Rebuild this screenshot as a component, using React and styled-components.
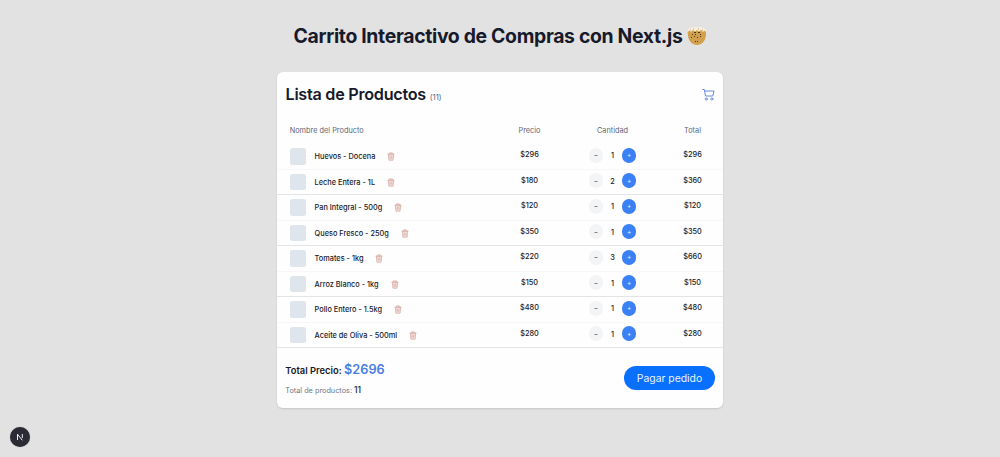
import React from 'react';
import styled, { createGlobalStyle } from 'styled-components';

const GlobalStyle = createGlobalStyle`
  * { box-sizing: border-box; }
  body {
    margin: 0;
    background: #e3e2e2;
    color: #171a2b;
    font-family: Inter, "Liberation Sans", sans-serif;
  }
`;

const Page = styled.main`
  min-height: 457px;
  display: flex;
  flex-direction: column;
  align-items: center;
  padding-top: 22px;
`;

const Title = styled.h1`
  display: flex;
  align-items: center;
  gap: 4px;
  height: 28px;
  margin: 0 0 22px 2px;
  font-size: 19.4px;
  font-weight: 650;
  letter-spacing: -0.33px;
  white-space: nowrap;
`;

const Card = styled.section`
  width: 446px;
  height: 336px;
  display: flex;
  flex-direction: column;
  background: #fefefe;
  border-radius: 6px;
  box-shadow: 0 1px 2px rgba(0, 0, 0, 0.12);
`;

const CardHeader = styled.header`
  height: 45px;
  display: flex;
  align-items: center;
  justify-content: space-between;
  padding: 0 8px 0 8.5px;
`;

const CardTitle = styled.h2`
  margin: 0 0 1px;
  font-size: 16.2px;
  font-weight: 600;
  letter-spacing: -0.27px;
  white-space: nowrap;
`;

const Count = styled.span`
  font-size: 7.7px;
  font-weight: 400;
  letter-spacing: 0;
  color: #5c6274;
`;

const Row = styled.div`
  display: grid;
  grid-template-columns: 219px 67px 99px 61px;
  height: 25.5px;
  border-bottom: 1px solid ${(p) => (p.$strong ? '#e3e4e6' : '#f7f7f9')};
  font-size: 7.35px;
  font-weight: 500;
`;

const HeadRow = styled(Row)`
  height: 27px;
  padding-bottom: 1px;
  border: 0;
  font-weight: 400;
  color: #5f6575;
`;

const Cell = styled.div`
  display: flex;
  align-items: center;
  justify-content: center;
  padding-bottom: ${(p) => p.$lift || 0}px;
`;

const NameCell = styled(Cell)`
  justify-content: flex-start;
  padding: 0.6px 0 0 12.7px;
  white-space: nowrap;
`;

const Thumb = styled.span`
  width: 16.5px;
  height: 16.5px;
  margin-right: 8.4px;
  border-radius: 2.5px;
  background: #dfe5ed;
`;

const Remove = styled.button`
  display: flex;
  margin: 0 0 0 12px;
  padding: 0;
  border: 0;
  background: none;
`;

const Step = styled.button`
  display: flex;
  align-items: center;
  justify-content: center;
  width: 14.6px;
  height: 14.6px;
  padding: 0;
  border: 0;
  border-radius: 50%;
  background: ${(p) => (p.$primary ? '#3b80f5' : '#f2f4f6')};
  color: ${(p) => (p.$primary ? '#e4eeff' : '#4f5562')};
  font: 500 6.5px Inter, sans-serif;
`;

const Quantity = styled.span`
  width: 18.6px;
  text-align: center;
  padding-top: 1px;
`;

const Footer = styled.footer`
  flex: 1;
  display: flex;
  align-items: center;
  justify-content: space-between;
  padding: 0 8px 0 8.3px;
`;

const TotalPrice = styled.p`
  margin: 2px 0 0;
  font-size: 9.4px;
  font-weight: 600;
  line-height: 18px;
  strong {
    font-size: 12.7px;
    font-weight: 600;
    color: #4a7de4;
  }
`;

const TotalCount = styled.p`
  margin: 3px 0 0;
  font-size: 7.3px;
  line-height: 14px;
  color: #70778a;
  span {
    font-size: 8.5px;
    font-weight: 500;
    color: #171a2b;
  }
`;

const PayButton = styled.button`
  width: 91px;
  height: 24px;
  padding: 0;
  border: 0;
  border-radius: 12px;
  background: #0870fc;
  color: #e9f3ff;
  font: 400 10.4px Inter, sans-serif;
`;

const DevBadge = styled.div`
  position: fixed;
  left: 10px;
  bottom: 10px;
  width: 20px;
  height: 20px;
  display: flex;
  align-items: center;
  justify-content: center;
  border-radius: 50%;
  background: #2a2b34;
  box-shadow: 0 0 1px rgba(0, 0, 0, 0.4);
`;

const CookieIcon = () => (
  <svg width="22" height="21" viewBox="0 0 22 21">
    <path d="M1.5 6Q1 3.5 3 3Q4 1 6.5 1.8Q9 .2 11 1.4Q14 0 16 1.8Q18.800 1.300 19.500 3.500Q21 5 20 7L17 9H4Z" fill="#f8eee0" />
    <path d="M1.700 6L3.500 4.500L5 6L7 4L9 5.500L11 4L13 5.500L15 4L17 6L18.500 4.500L20 6C20.500 14 16.500 19 11 19S1.500 14 1.700 6Z" fill="#d2a04d" />
    <path d="M4 4h1M7 3h1M12 3h1M16 4h1M5 6h1M14 5h1M18 6h1" stroke="#d9a35c" />
    <path d="M8 6.500h2M12 6.500h2M6 8.500h1M9 8.500h1M14 8.500h1M5 11.500h1M8 10.500h1M11 11.500h1M14 10.500h1M9 15.500h1M11 15.500h1" stroke="#4a371f" />
  </svg>
);

const CartIcon = () => (
  <svg width="13" height="13" viewBox="0 0 13 13" fill="none" stroke="#5580e0" strokeLinecap="round" strokeLinejoin="round">
    <path d="M.7 1.500H2.300L3.500 8H10.800L12 3H2.800" strokeWidth=".9" />
    <circle cx="4.200" cy="11" r="1.100" strokeWidth=".8" />
    <circle cx="9.800" cy="11" r="1.100" strokeWidth=".8" />
  </svg>
);

const TrashIcon = () => (
  <svg width="8" height="9" viewBox="0 0 8 9" fill="none" stroke="#d3a69d" strokeWidth=".7">
    <path d="M1.300 2.200L1.900 8.200H6.100L6.700 2.200Z" fill="#f4e1dc" />
    <path d="M.5 2.100H7.500M2.700 2V.8H5.300V2M3.200 3.700V6.700M4.800 3.700V6.700" />
  </svg>
);

const NextIcon = () => (
  <svg width="8" height="8" viewBox="0 0 8 8" fill="none" stroke="#eeeef2">
    <path d="M1.500 7V1.200L6.300 7.300M6.300 1V5" />
  </svg>
);

const products = [
  ['Huevos - Docena', 296, 1, 296],
  ['Leche Entera - 1L', 180, 2, 360],
  ['Pan Integral - 500g', 120, 1, 120],
  ['Queso Fresco - 250g', 350, 1, 350],
  ['Tomates - 1kg', 220, 3, 660],
  ['Arroz Blanco - 1kg', 150, 1, 150],
  ['Pollo Entero - 1.5kg', 480, 1, 480],
  ['Aceite de Oliva - 500ml', 280, 1, 280],
];

export default function App() {
  return (
    <>
      <GlobalStyle />
      <Page>
        <Title>
          Carrito Interactivo de Compras con Next.js
          <CookieIcon />
        </Title>
        <Card>
          <CardHeader>
            <CardTitle>
              Lista de Productos <Count>(11)</Count>
            </CardTitle>
            <CartIcon />
          </CardHeader>
          <HeadRow>
            <NameCell>Nombre del Producto</NameCell>
            <Cell>Precio</Cell>
            <Cell>Cantidad</Cell>
            <Cell>Total</Cell>
          </HeadRow>
          {products.map(([name, price, quantity, total], i) => (
            <Row key={name} $strong={i % 2 === 1}>
              <NameCell>
                <Thumb />
                {name}
                <Remove aria-label={`Eliminar ${name}`}>
                  <TrashIcon />
                </Remove>
              </NameCell>
              <Cell $lift={3}>${price}</Cell>
              <Cell $lift={2}>
                <Step>−</Step>
                <Quantity>{quantity}</Quantity>
                <Step $primary>+</Step>
              </Cell>
              <Cell $lift={3}>${total}</Cell>
            </Row>
          ))}
          <Footer>
            <div>
              <TotalPrice>
                Total Precio: <strong>$2696</strong>
              </TotalPrice>
              <TotalCount>
                Total de productos: <span>11</span>
              </TotalCount>
            </div>
            <PayButton>Pagar pedido</PayButton>
          </Footer>
        </Card>
      </Page>
      <DevBadge>
        <NextIcon />
      </DevBadge>
    </>
  );
}
